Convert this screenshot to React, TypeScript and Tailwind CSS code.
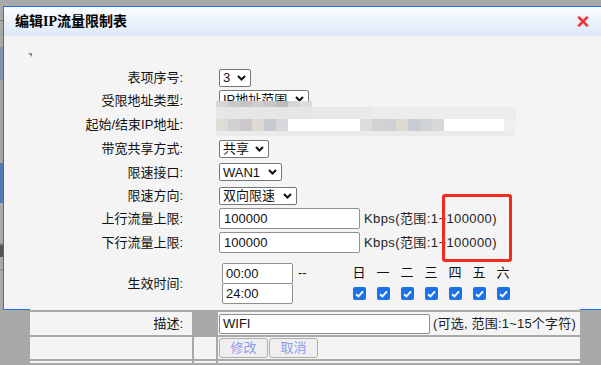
import React from "react";

const SANS = "[font-family:'Liberation_Sans','Noto_Sans_CJK_SC',sans-serif]";

function Chevron() {
  return (
    <svg width="9" height="6" viewBox="0 0 9 6" className="shrink-0">
      <polyline points="1,1 4.5,4.5 8,1" fill="none" stroke="#111" strokeWidth="2" />
    </svg>
  );
}

function Sel({ className, children }: { className: string; children: React.ReactNode }) {
  return (
    <div
      className={`flex h-[18px] items-center justify-between rounded-[2px] border border-[#767676] bg-white pl-[3px] pr-[4px] text-[13px] leading-none text-[#111] ${className}`}
    >
      <span>{children}</span>
      <Chevron />
    </div>
  );
}

function Row({ label, h, children }: { label: string; h: string; children?: React.ReactNode }) {
  return (
    <div className={`flex items-center ${h}`}>
      <div className="w-[179px] text-right text-[13px] leading-none text-[#111]">{label}</div>
      <div className="ml-[36px] flex items-center">{children}</div>
    </div>
  );
}

function Check() {
  return (
    <div className="flex h-[13px] w-[13px] items-center justify-center rounded-[2px] bg-[#1a73e8]">
      <svg width="9" height="8" viewBox="0 0 9 8">
        <polyline points="1,4.2 3.4,6.4 8,1.4" fill="none" stroke="#fff" strokeWidth="1.9" />
      </svg>
    </div>
  );
}

const days = ["日", "一", "二", "三", "四", "五", "六"];

const mosaicA = ["#d6d6da", "#cbc8ca", "#c7c3c5", "#d2ced0", "#cbc5c6", "#bfbabc", "#d6d6d8", "#dcdcde"];
const mosaicC1 = ["#dddcd6", "#d3d0d3", "#ccc8cb", "#dddbd4", "#c7cad0", "#d8d8da"];
const mosaicC2 = ["#dcdcd8", "#d2d2d6", "#cfd0d4", "#dedbd0", "#c8ccd2", "#d0d2d6", "#d8d8da"];

function Mosaic() {
  return (
    <div className="absolute left-[216px] top-[101px] flex w-[300px] flex-col">
      <div className="flex h-[6px]">
        {mosaicA.map((c, i) => (
          <div key={i} className="h-full w-[12px]" style={{ background: c }} />
        ))}
      </div>
      <div className="flex h-[12px]">
        <div className="h-full w-[96px] bg-[#e6e6e6]" />
        <div className="h-full w-[60px] bg-[#e9e9e9]" />
        <div className="h-full w-[144px] bg-[#ececec]" />
      </div>
      <div className="flex h-[12px]">
        {mosaicC1.map((c, i) => (
          <div key={i} className="h-full w-[12px]" style={{ background: c }} />
        ))}
        <div className="h-full w-[72px] bg-white" />
        {mosaicC2.map((c, i) => (
          <div key={i} className="h-full w-[12px]" style={{ background: c }} />
        ))}
        <div className="h-full w-[60px] bg-white" />
        <div className="h-full w-[12px] bg-[#f0f0f0]" />
      </div>
      <div className="h-[5px] w-[298px] bg-[#eaeaea]" />
    </div>
  );
}

function Dialog() {
  return (
    <div className="flex h-[304px] w-[620px] flex-col border border-[#1a73e8] bg-[#f4f4f4]">
      <div className="flex h-[29px] shrink-0 items-center bg-gradient-to-b from-[#fbfdff] to-[#dce8f8] pl-[11px]">
        <span className="text-[14px] font-bold leading-none text-black [font-family:'Liberation_Serif','Noto_Sans_CJK_SC',serif]">
          编辑IP流量限制表
        </span>
        <svg width="12" height="11" viewBox="0 0 12 11" className="ml-[450px]">
          <path d="M2 1.5 L10 9.5 M10 1.5 L2 9.5" stroke="#f7b0b0" strokeWidth="3.6" strokeLinecap="round" />
          <path d="M2 1.5 L10 9.5 M10 1.5 L2 9.5" stroke="#ec2a2f" strokeWidth="2" strokeLinecap="round" />
        </svg>
      </div>
      <div className="flex flex-col">
        <div className="ml-[24px] mt-[17px] h-0 w-0 border-l-[4px] border-t-[4px] border-l-transparent border-t-[#8a8a8a]" />
        <div className="mt-[9px] flex flex-col">
          <Row label="表项序号:" h="h-[23px]">
            <Sel className="w-[32px]">3</Sel>
          </Row>
          <Row label="受限地址类型:" h="h-[23px]">
            <div className="-mt-[3px]">
              <Sel className="w-[90px]">IP地址范围</Sel>
            </div>
          </Row>
          <Row label="起始/结束IP地址:" h="h-[25px]" />
          <Row label="带宽共享方式:" h="h-[23px]">
            <Sel className="w-[50px]">共享</Sel>
          </Row>
          <Row label="限速接口:" h="h-[24px]">
            <Sel className="w-[63px]">WAN1</Sel>
          </Row>
          <Row label="限速方向:" h="h-[23px]">
            <Sel className="w-[78px]">双向限速</Sel>
          </Row>
          <Row label="上行流量上限:" h="h-[23px]">
            <div className="flex h-[21px] w-[141px] items-center rounded-[2px] border border-[#8f8f8f] bg-white pl-[4px] text-[13px] text-[#111]">
              100000
            </div>
            <span className="ml-[4px] text-[13px] tracking-[0.4px] text-[#222]">Kbps(范围:1~100000)</span>
          </Row>
          <Row label="下行流量上限:" h="h-[25px]">
            <div className="flex h-[21px] w-[141px] items-center rounded-[2px] border border-[#8f8f8f] bg-white pl-[4px] text-[13px] text-[#111]">
              100000
            </div>
            <span className="ml-[4px] text-[13px] tracking-[0.4px] text-[#222]">Kbps(范围:1~100000)</span>
          </Row>
          <div className="mt-[8px] flex h-[41px] items-center">
            <div className="w-[179px] text-right text-[13px] leading-none text-[#111]">生效时间:</div>
            <div className="ml-[36px] flex h-full items-start">
              <div className="w-[79px] pl-[3px]">
                <div className="flex h-[21px] w-[71px] items-center rounded-[2px] border border-[#8f8f8f] bg-white pl-[3px] text-[13px] text-[#111]">
                  00:00
                </div>
                <div className="-mt-px flex h-[21px] w-[71px] items-center rounded-[2px] border border-[#8f8f8f] bg-white pl-[3px] text-[13px] text-[#111]">
                  24:00
                </div>
              </div>
              <div className="w-[49px] text-[13px] leading-[20px] text-[#111]">--</div>
              <div className="grid w-[168px] grid-cols-7">
                {days.map((d) => (
                  <div key={d} className="h-[20px] text-center text-[13px] leading-[20px] text-[#111]">
                    {d}
                  </div>
                ))}
                {days.map((d) => (
                  <div key={"c" + d} className="mt-[4px] flex justify-center">
                    <Check />
                  </div>
                ))}
              </div>
            </div>
          </div>
        </div>
      </div>
    </div>
  );
}

function BottomTable() {
  return (
    <div className="relative z-10 -mt-px ml-[27px] flex w-[550px] flex-col bg-[#a9a9a9]">
      <div className="h-px bg-[#f4f4f4]" />
      <div className="mt-[2px] flex h-[23px] gap-[2px]">
        <div className="flex w-[162px] items-center justify-end bg-[#f4f4f4] pr-[9px] text-[13px] text-[#111]">描述:</div>
        <div className="w-[22px]" />
        <div className="flex w-[362px] items-center bg-[#f4f4f4] pl-[1px]">
          <div className="flex h-[20px] w-[211px] items-center rounded-[2px] border border-[#8f8f8f] bg-white pl-[3px] text-[13px] text-[#111]">
            WIFI
          </div>
          <span className="ml-[3px] text-[13px] tracking-[0.2px] text-[#222]">(可选, 范围:1~15个字符)</span>
        </div>
      </div>
      <div className="mt-[2px] flex h-[22px] gap-[2px]">
        <div className="w-[162px] bg-[#f4f4f4]" />
        <div className="w-[22px] bg-[#f4f4f4]" />
        <div className="flex w-[362px] items-center bg-[#f4f4f4] pl-[1px]">
          <div className="flex h-[20px] w-[49px] items-center justify-center rounded-[3px] border border-[#adadad] bg-[#efefef] text-[13px] text-[#8b9df0]">
            修改
          </div>
          <div className="ml-px flex h-[20px] w-[49px] items-center justify-center rounded-[3px] border border-[#adadad] bg-[#efefef] text-[13px] text-[#8b9df0]">
            取消
          </div>
        </div>
      </div>
      <div className="mt-[2px] flex h-[2px] gap-[2px]">
        <div className="w-[162px] bg-[#f4f4f4]" />
        <div className="w-[22px] bg-[#f4f4f4]" />
        <div className="w-[362px] bg-[#f4f4f4]" />
      </div>
      <div className="h-[4px]" />
    </div>
  );
}

function LeftStrip() {
  return (
    <div className="flex h-[309px] w-[3px] shrink-0 flex-col">
      <div className="h-[20px] bg-[#a9a9a9]" />
      <div className="h-px bg-[#7f7f7f]" />
      <div className="h-[26px] bg-[#a9a9a9]" />
      <div className="h-[33px] bg-[#8193ad]" />
      <div className="h-[83px] bg-[#a4a4a4]" />
      <div className="h-[40px] bg-[#5479b3]" />
      <div className="h-[40px] bg-[#a9a9a9]" />
      <div className="h-[2px] bg-[#8a8a8a]" />
      <div className="h-[12px] bg-[#555]" />
      <div className="h-[12px] bg-[#a9a9a9]" />
      <div className="h-px bg-[#8a8a8a]" />
    </div>
  );
}

export default function App() {
  return (
    <div className={`relative h-[365px] w-[601px] overflow-hidden bg-[#a9a9a9] ${SANS}`}>
      <div className="flex">
        <LeftStrip />
        <div className="flex flex-col pt-[6px]">
          <Dialog />
          <BottomTable />
        </div>
      </div>
      <Mosaic />
      <div className="absolute left-[442px] top-[194px] h-[68px] w-[70px] rounded-[3px] border-[3px] border-[#f52a1e]" />
    </div>
  );
}
